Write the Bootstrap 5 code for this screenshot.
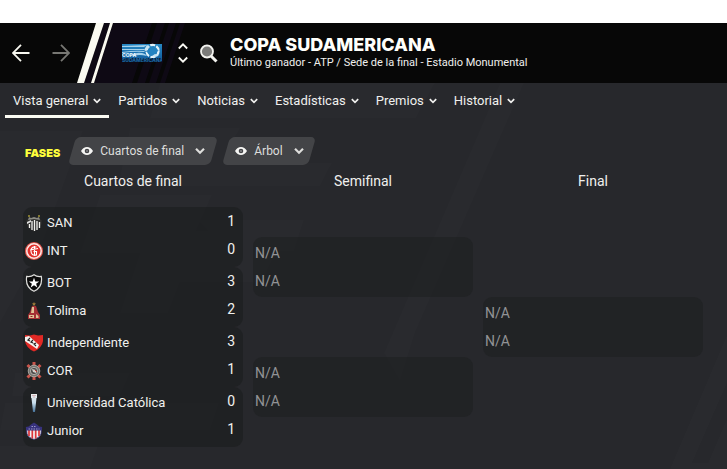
<!DOCTYPE html>
<html lang="es">
<head>
<meta charset="utf-8">
<meta name="viewport" content="width=device-width, initial-scale=1">
<title>Copa Sudamericana</title>
<link href="https://cdn.jsdelivr.net/npm/bootstrap@5.3.0/dist/css/bootstrap.min.css" rel="stylesheet">
<style>
body{font-family:Roboto,"Liberation Sans",sans-serif;font-size:14px;line-height:20px;background:#27282c;color:#f0f0ee}
svg{display:block;flex:none}
button{background:none;border:0;padding:0;color:inherit}
.top-strip{height:23px;background:#fff}
.comp-header{height:60px;background:#070707;padding-left:12px}
.backdrop{position:absolute;top:0;left:0;z-index:-1}
.history{gap:22px;width:110px}
.search{margin-left:11px}
.comp-title{font-family:Inter,sans-serif;font-weight:800;font-size:18px;line-height:20px;color:#fffffb}
.comp-sub{font-size:11px;line-height:16px}
.tabs{height:35px;padding-left:5px;gap:1px}
.tabs .nav-link{padding:9px 8px 6px;gap:5px;font-size:13px;color:#f0f0ee;line-height:17px;border-bottom:3px solid transparent}
.tabs .nav-link.active{border-color:#fbfbf3}
.filters{padding:19px 24px 0 25px;gap:12px}
.phase{font-family:Inter,sans-serif;font-weight:900;font-size:11px;color:#ffff3c;padding-top:4px}
.pill{position:relative;z-index:0;height:28px;padding:0 9px;gap:7px;font-size:12px;color:#dededc}
.pill::before{content:"";position:absolute;inset:0;z-index:-1;background:#434447;border-radius:5px;transform:skewX(-16deg)}
.bracket{display:grid;grid-template-columns:repeat(3,minmax(0,1fr));column-gap:10px;padding:6px 24px 22px 23px}
.round-name{font-size:14px;font-weight:400;line-height:20px;margin:0 0 16px}
.tie{height:60px;border-radius:9px;padding:2px 8px 2px 2px;background:rgba(22,23,24,.42)}
.tie.pending{background:rgba(27,28,29,.42);color:#929395}
.side{height:28px;gap:4px}
.team{font-size:13px}
.score{padding-bottom:4px}
.crest{width:18px;height:18px}
</style>
<script src="https://cdn.jsdelivr.net/npm/bootstrap@5.3.0/dist/js/bootstrap.bundle.min.js"></script>
</head>
<body>
<svg width="0" height="0" class="position-absolute" aria-hidden="true">
  <symbol id="chev" viewBox="0 0 8 6"><path d="M.8 1.2 4 4.4 7.2 1.2" fill="none" stroke="currentColor" stroke-width="1.7"/></symbol>
  <symbol id="eye" viewBox="0 0 12 8"><path fill-rule="evenodd" fill="#f5f5f3" d="M0 4Q2.4 0 6 0T12 4Q9.6 8 6 8T0 4ZM8.3 4A2.3 2.3 0 1 0 3.7 4A2.3 2.3 0 1 0 8.3 4Z"/><circle cx="6" cy="4" r="1" fill="#858587"/></symbol>
</svg>
<div class="top-strip"></div>
<header class="comp-header position-relative z-0 d-flex align-items-center">
  <svg class="backdrop" width="260" height="60" aria-hidden="true">
    <path d="M113 0H185L165 60H94Z" fill="#0e0914"/><path d="M104 0h6L91 60h-7Z" fill="#0e0914"/>
    <path d="M152 0h5l-20 60h-5ZM165 0h4l-20 60h-4ZM176 0h4l-20 60h-4Z" fill="#070707"/>
    <path d="M96 0h8L84 60h-7ZM110 0h3L94 60h-3Z" fill="#fafaf0"/>
  </svg>
  <div class="history d-flex">
    <button type="button" aria-label="Atrás"><svg width="18" height="18" fill="none" stroke="#f8f8f0" stroke-width="1.8"><path d="M17.5 9H1.5M9 .8.9 9 9 17.2"/></svg></button>
    <button type="button" aria-label="Adelante"><svg width="18" height="18" fill="none" stroke="#777773" stroke-width="1.8"><path d="M.5 9h16M9 .8 17.1 9 9 17.2"/></svg></button>
  </div>
  <svg width="40" height="20" viewBox="0 0 40 20" role="img" aria-label="Copa Sudamericana">
    <defs><linearGradient id="lg" x2="0" y2="1"><stop stop-color="#2788c4"/><stop offset="1" stop-color="#1263a3"/></linearGradient></defs>
    <path d="M0 1h40v14H0Z" fill="url(#lg)"/>
    <path d="M0 3 25 2l-3 2L0 4ZM0 6h22v1L0 7ZM0 9q14-2 22-1l1 1Q12 8 0 10ZM9 12q7-4 14-1l2 2q-8-2-13 0Z" fill="#a5d2eb"/>
    <circle cx="30.5" cy="8" r="6" fill="none" stroke="#e3f3fa" stroke-width="2.4" stroke-dasharray="5 1.3"/><path d="m27 4 5-1 4 4-2 5-6 1-3-4Z" fill="#2383c1"/><path d="m25 2 3 2-4 4-2-1ZM33 11l4 1-3 2-4-1Z" fill="#c6e4f2"/>
    <text x="0" y="14" fill="#e6f4fb" font-family="Inter,sans-serif" font-weight="800" font-size="5">COPA</text>
    <path d="M0 15h40v4H0Z" fill="#061a31"/>
    <text x="0" y="19" fill="#1f6aa6" font-family="Inter,sans-serif" font-weight="700" font-size="5">SUDAMERICANA</text>
  </svg>
  <button type="button" class="ms-3" aria-label="Cambiar competición"><svg width="10" height="22" fill="none" stroke="#fafaf5" stroke-width="1.8"><path d="m.8 6.5 4.2-4.2 4.2 4.2M.8 15.5 5 19.7l4.2-4.2"/></svg></button>
  <button type="button" class="search" aria-label="Buscar"><svg width="19" height="19"><circle cx="8" cy="7.5" r="6" fill="#7b7b79" stroke="#f3f3ef" stroke-width="1.8"/><path d="m12 12 5.5 5.5" stroke="#f3f3ef" stroke-width="3"/></svg></button>
  <div class="ps-2 ms-1">
    <h1 class="comp-title m-0">COPA SUDAMERICANA</h1>
    <div class="comp-sub">Último ganador - ATP / Sede de la final - Estadio Monumental</div>
  </div>
</header>
<main class="position-relative z-0">
  <svg class="backdrop" width="100%" height="386" viewBox="0 0 727 386" preserveAspectRatio="xMinYMin slice" aria-hidden="true">
    <g fill="#fff" fill-opacity=".012">
      <path d="M0 48H83L38 172 0 240ZM130 45H240L222 80H332L320 103H118ZM100 112H212L196 148H208L198 137H304L294 168H276L262 199H180L168 230H120L140 170H80Z"/>
      <path d="M500 0h24L415 250 400 298 384 270ZM160 0H435L416 35H150ZM15 290H130L120 313H12ZM5 320H219L210 347H0ZM0 363h98l-8 23H0Z"/>
      <path d="M727 252v48l-35 80h16l19-44v50h-57Z"/>
    </g>
  </svg>
  <nav class="tabs nav flex-nowrap" aria-label="Secciones">
    <a class="nav-link active d-flex align-items-center" aria-current="page" href="#">Vista general<svg width="8" height="6"><use href="#chev"/></svg></a>
    <a class="nav-link d-flex align-items-center" href="#">Partidos<svg width="8" height="6"><use href="#chev"/></svg></a>
    <a class="nav-link d-flex align-items-center" href="#">Noticias<svg width="8" height="6"><use href="#chev"/></svg></a>
    <a class="nav-link d-flex align-items-center" href="#">Estadísticas<svg width="8" height="6"><use href="#chev"/></svg></a>
    <a class="nav-link d-flex align-items-center" href="#">Premios<svg width="8" height="6"><use href="#chev"/></svg></a>
    <a class="nav-link d-flex align-items-center" href="#">Historial<svg width="8" height="6"><use href="#chev"/></svg></a>
  </nav>
  <div class="filters d-flex align-items-center">
    <span class="phase">FASES</span>
    <button type="button" class="pill d-flex align-items-center"><svg width="12" height="8"><use href="#eye"/></svg>Cuartos de final<svg class="ms-1" width="10" height="8"><use href="#chev"/></svg></button>
    <button type="button" class="pill d-flex align-items-center"><svg width="12" height="8"><use href="#eye"/></svg>Árbol<svg class="ms-1" width="10" height="8"><use href="#chev"/></svg></button>
  </div>
  <div class="bracket">
    <section class="d-flex flex-column">
      <h2 class="round-name text-center">Cuartos de final</h2>
      <div class="tie">
        <div class="side d-flex align-items-center"><svg class="crest" viewBox="0 0 18 18"><path d="M1.500 6Q9 2 16.500 6v4q-1.500 5-7.500 7.500Q3 15 1.500 10Z" fill="#30302f"/><path d="M3 6 4 3l2 1 3-1 3 1 2-1 1 3-6-1Z" fill="#8a8a82"/><path d="M4 3V1M14 3V1" stroke="#a99b37" stroke-width="1.4"/><path d="m2 8 4-2v2L2 10Z" fill="#ddd"/><path d="M4.500 10v4M7 7v9M9.500 6v11M12 7v9M14.500 8v6" stroke="#f1f1ee" stroke-width="1.3"/></svg><span class="team">SAN</span><span class="score ms-auto">1</span></div>
        <div class="side d-flex align-items-center"><svg class="crest" viewBox="0 0 18 18"><circle cx="9" cy="9" r="9" fill="#e2554b"/><circle cx="9" cy="9" r="7.2" fill="#e0302c" stroke="#fbe9e7" stroke-width="1.5"/><path d="M11.500 5Q6 4 6 9t5.500 4V9.500H8.500M9.500 4v10M5 8l8-1.500" fill="none" stroke="#fff" stroke-width="1.1"/></svg><span class="team">INT</span><span class="score ms-auto">0</span></div>
      </div>
      <div class="tie">
        <div class="side d-flex align-items-center"><svg class="crest" viewBox="0 0 18 18"><path d="M9 .8Q12 3 16.3 2.4 18 13 9 17.3 0 13 1.7 2.4 6 3 9 .8Z" fill="#090909" stroke="#dededc" stroke-width="1.2"/><path d="m9 3.7 1.3 3.7h3.9l-3.1 2.3 1.2 3.8L9 11.3l-3.3 2.2 1.2-3.8-3.1-2.3h3.9Z" fill="#fff"/></svg><span class="team">BOT</span><span class="score ms-auto">3</span></div>
        <div class="side d-flex align-items-center"><svg class="crest" viewBox="0 0 18 18"><path d="m9 0 .7 1.2 1.3.3-1 1 .2 1.3L9 3.2l-1.2.6.2-1.3-1-1 1.3-.3Z" fill="#9c7939"/><path d="M7 4h4l2 6 2 3v4H3v-4l2-3Z" fill="#a52f35"/><path d="M7 5h2v6H6ZM4 13h5v3H4ZM11 12l2.500 2v2H11Z" fill="#dfc296"/><path d="M5.500 14.500h2" stroke="#8c1e29"/></svg><span class="team">Tolima</span><span class="score ms-auto">2</span></div>
      </div>
      <div class="tie">
        <div class="side d-flex align-items-center"><svg class="crest" viewBox="0 0 18 18"><path d="M0 1 5 1.500 9 .5l4 1L18 1v6q-1 7-9 10.500Q1 14 0 7Z" fill="#e12925"/><path d="M0 3 4 2l10 9-2 4L0 7Z" fill="#f4f4f0"/><path d="m5 4-2 2 2 1M8 6 6 8l2 1M11 9l-2 1 2 2" fill="none" stroke="#222" stroke-width="1.2"/></svg><span class="team">Independiente</span><span class="score ms-auto">3</span></div>
        <div class="side d-flex align-items-center"><svg class="crest" viewBox="0 0 18 18"><path d="m2.500 3 13 12.500M15.500 3l-13 12.500M9 0v4M9 14v4" stroke="#c9554b" stroke-width="3"/><circle cx="9" cy="9" r="5.800" fill="#777672" stroke="#a5a39c"/><circle cx="9" cy="9" r="3.600" fill="#4a4948" stroke="#c5c2bc" stroke-width=".8"/><path d="m7 7 4 1v3l-3-1Z" fill="#d6d0ca"/><path d="m10 8 2 2" stroke="#c73830"/></svg><span class="team">COR</span><span class="score ms-auto">1</span></div>
      </div>
      <div class="tie">
        <div class="side d-flex align-items-center"><svg class="crest" viewBox="0 0 18 18"><defs><linearGradient id="uc" x2="0" y2="1"><stop stop-color="#eee"/><stop offset=".5" stop-color="#c6ddec"/><stop offset="1" stop-color="#426f96"/></linearGradient></defs><path d="M6 0h6v4h-.5L10 18H8L6.500 4H6Z" fill="url(#uc)"/><path d="M7 1.500h4M8 3h2" stroke="#cfa0a6" stroke-width=".7"/></svg><span class="team">Universidad Católica</span><span class="score ms-auto">0</span></div>
        <div class="side d-flex align-items-center"><svg class="crest" viewBox="0 0 18 18"><path d="M1.500 6h15l-.5 6q-1 3.500-7 5.500-6-2-7-5.500Z" fill="#f1eef0" stroke="#332d72" stroke-width=".8"/><path d="M4 8v6M7.300 8v8.500M10.700 8v8.500M14 8v6" stroke="#dc3439" stroke-width="1.7"/><path d="M.8 5Q4 5 6 2.500L9 .5l3 2Q14 5 17.200 5L16.500 8.500h-15Z" fill="#37327d"/><path d="M3.500 7h11M6.500 4.500h5" stroke="#a5a1cf" stroke-width=".9" stroke-dasharray="1.5 1"/></svg><span class="team">Junior</span><span class="score ms-auto">1</span></div>
      </div>
    </section>
    <section class="d-flex flex-column">
      <h2 class="round-name text-center">Semifinal</h2>
      <div class="d-flex flex-column justify-content-around flex-grow-1">
        <div class="tie pending"><div class="side d-flex align-items-center">N/A</div><div class="side d-flex align-items-center">N/A</div></div>
        <div class="tie pending"><div class="side d-flex align-items-center">N/A</div><div class="side d-flex align-items-center">N/A</div></div>
      </div>
    </section>
    <section class="d-flex flex-column">
      <h2 class="round-name text-center">Final</h2>
      <div class="d-flex flex-column justify-content-around flex-grow-1">
        <div class="tie pending"><div class="side d-flex align-items-center">N/A</div><div class="side d-flex align-items-center">N/A</div></div>
      </div>
    </section>
  </div>
</main>
</body>
</html>
